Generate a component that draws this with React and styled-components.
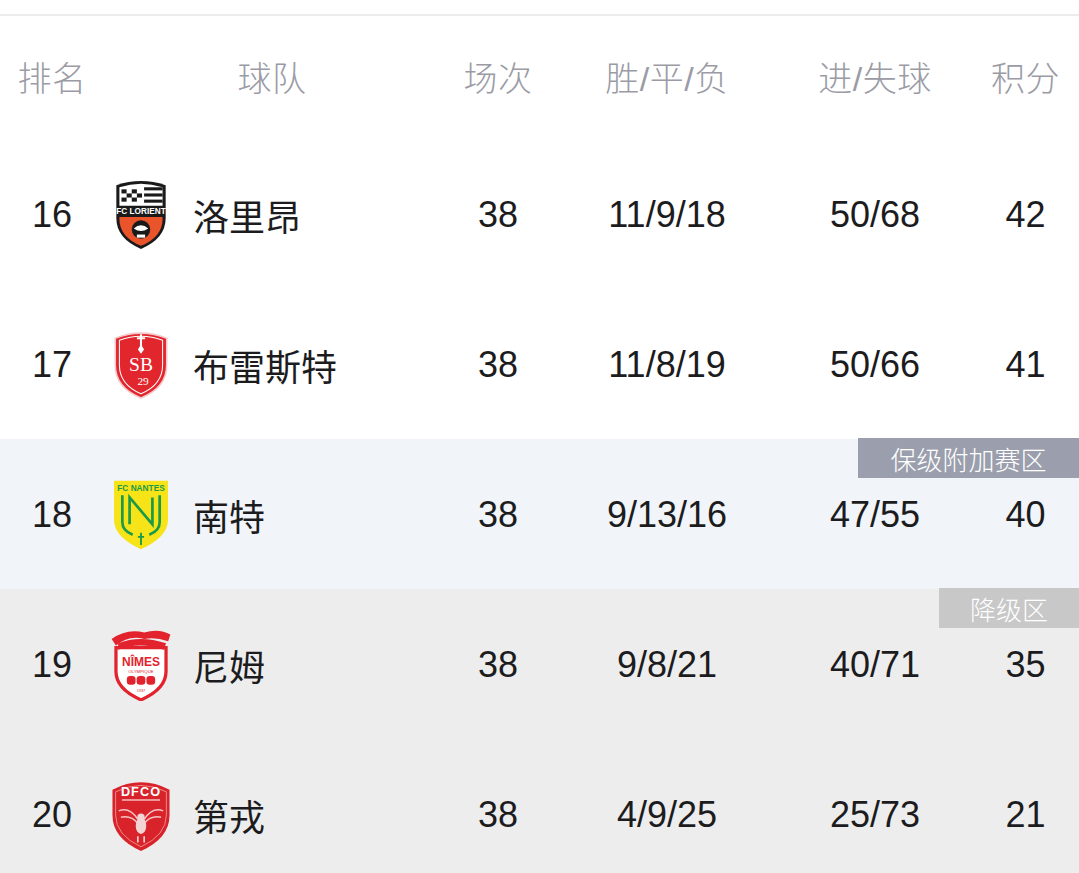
import React from "react"
import styled, { createGlobalStyle } from "styled-components"

const GlobalStyle = createGlobalStyle`
  html, body {
    margin: 0;
    padding: 0;
    background: #ffffff;
  }
  body {
    font-family: "Liberation Sans", "Noto Sans CJK SC", sans-serif;
    color: #1c1c1e;
  }
`

const COLS = "104px 336px 116px 222px 194px 107px"

const Page = styled.div`
  width: 1079px;
  height: 873px;
  overflow: hidden;
  padding-top: 14px;
  box-sizing: border-box;
`

const Header = styled.div`
  display: grid;
  grid-template-columns: ${COLS};
  align-items: center;
  height: 125px;
  border-top: 2px solid #ececee;
  box-sizing: border-box;
  color: #9b9ba6;
  font-size: 34px;
  font-weight: 300;
`

const HeadCell = styled.div`
  text-align: center;
  margin-top: -2px;
  letter-spacing: 0.5px;
`

const Row = styled.div`
  position: relative;
  display: grid;
  grid-template-columns: ${COLS};
  align-items: center;
  height: 150px;
  background: ${(p) => p.$bg || "#ffffff"};
  font-size: 36px;
`

const Cell = styled.div`
  text-align: center;
  padding-top: 2px;
`

const TeamCell = styled.div`
  display: flex;
  align-items: center;
  padding-left: 4px;
  gap: 19px;
`

const TeamName = styled.span`
  padding-top: 2px;
`

const LogoBox = styled.div`
  width: 66px;
  height: 76px;
  display: flex;
  align-items: center;
  justify-content: center;
`

const Badge = styled.div`
  position: absolute;
  top: -1px;
  right: 0;
  height: 40px;
  width: ${(p) => p.$w}px;
  background: ${(p) => p.$bg};
  color: #ffffff;
  font-size: 26px;
  font-weight: 300;
  display: flex;
  align-items: center;
  justify-content: center;
`

const Lorient = () => (
  <svg width="58" height="74" viewBox="4 0 52 72">
    <path d="M6 8 Q30 0 54 8 L54 40 Q54 60 30 70 Q6 60 6 40 Z" fill="#1a1a1a" />
    <path d="M9 10 Q30 3 51 10 L51 28 L9 28 Z" fill="#ffffff" />
    <g fill="#1a1a1a">
      <rect x="11" y="12" width="5" height="4" />
      <rect x="21" y="12" width="5" height="4" />
      <rect x="16" y="16" width="5" height="4" />
      <rect x="26" y="16" width="5" height="4" />
      <rect x="11" y="20" width="5" height="4" />
      <rect x="21" y="20" width="5" height="4" />
      <rect x="33" y="10" width="18" height="3" />
      <rect x="33" y="16" width="18" height="3" />
      <rect x="33" y="22" width="18" height="3" />
    </g>
    <text x="30" y="36" textAnchor="middle" fontSize="8" fontWeight="700" fill="#ffffff" fontFamily="Liberation Sans, sans-serif">FC LORIENT</text>
    <path d="M9 39 L51 39 L51 41 Q51 58 30 67 Q9 58 9 41 Z" fill="#e9542a" />
    <circle cx="30" cy="51" r="9" fill="#1a1a1a" />
    <path d="M23 50 Q30 44 37 50 Q30 55 23 50 Z" fill="#ffffff" />
    <rect x="26" y="56" width="8" height="3" fill="#ffffff" />
  </svg>
)

const Brest = () => (
  <svg width="58" height="72" viewBox="4 2 52 70">
    <path d="M5 12 Q30 2 55 12 L55 38 Q55 60 30 70 Q5 60 5 38 Z" fill="#e2262d" stroke="#f4c7c8" strokeWidth="1.5" />
    <path d="M9 14 Q30 6 51 14 L51 38 Q51 57 30 66 Q9 57 9 38 Z" fill="none" stroke="#ffffff" strokeWidth="1" />
    <path d="M30 8 L30 24 M26 12 L34 12" stroke="#ffffff" strokeWidth="2" />
    <path d="M30 18 L33 23 L30 27 L27 23 Z" fill="#ffffff" />
    <text x="30" y="44" textAnchor="middle" fontSize="19" fontFamily="Liberation Serif, serif" fill="#ffffff">SB</text>
    <text x="32" y="57" textAnchor="middle" fontSize="11" fontFamily="Liberation Serif, serif" fill="#ffffff">29</text>
  </svg>
)

const Nantes = () => (
  <svg width="56" height="74" viewBox="3 4 54 68">
    <path d="M4 6 L56 6 L56 44 Q56 60 30 72 Q4 60 4 44 Z" fill="#f6e318" />
    <text x="30" y="16" textAnchor="middle" fontSize="8" fontWeight="700" fill="#1d9a48" fontFamily="Liberation Sans, sans-serif">FC NANTES</text>
    <g fill="none" stroke="#1d9a48" strokeWidth="2.6">
      <path d="M12 20 L12 46 Q12 54 22 58" />
      <path d="M48 20 L48 46 Q48 54 38 58" />
      <path d="M19 48 L19 22 L41 48 L41 22" />
    </g>
    <path d="M30 56 L30 68 M27 60 L33 60" stroke="#1d9a48" strokeWidth="1.8" />
  </svg>
)

const Nimes = () => (
  <svg width="62" height="74" viewBox="3 3 56 68">
    <path d="M8 22 L54 22 L54 44 Q54 60 31 70 Q8 60 8 44 Z" fill="#ffffff" stroke="#e2232d" strokeWidth="3" />
    <path d="M4 14 Q18 4 34 8 Q48 4 58 10 L56 16 Q44 12 34 14 Q20 10 8 20 Z" fill="#e2232d" />
    <path d="M10 18 Q30 10 54 18 L52 24 Q30 16 10 24 Z" fill="#e2232d" />
    <text x="31" y="39" textAnchor="middle" fontSize="11" fontWeight="700" fill="#e2232d" fontFamily="Liberation Sans, sans-serif">NÎMES</text>
    <text x="31" y="45" textAnchor="middle" fontSize="4" fill="#e2232d" fontFamily="Liberation Sans, sans-serif">OLYMPIQUE</text>
    <g fill="#e2232d">
      <rect x="18" y="48" width="8" height="8" rx="3" />
      <rect x="27" y="48" width="8" height="8" rx="3" />
      <rect x="36" y="48" width="8" height="8" rx="3" />
    </g>
    <text x="31" y="63" textAnchor="middle" fontSize="3.5" fill="#e2232d" fontFamily="Liberation Sans, sans-serif">1937</text>
  </svg>
)

const Dijon = () => (
  <svg width="62" height="74" viewBox="3 2 56 70">
    <path d="M4 14 Q31 0 58 14 L58 38 Q58 60 31 72 Q4 60 4 38 Z" fill="#d8232a" />
    <path d="M7 16 Q31 4 55 16 L55 38 Q55 57 31 68 Q7 57 7 38 Z" fill="none" stroke="#f29a9e" strokeWidth="0.8" />
    <text x="31" y="20" textAnchor="middle" fontSize="12" fontWeight="700" fill="#ffffff" fontFamily="Liberation Sans, sans-serif" letterSpacing="1">DFCO</text>
    <rect x="13" y="23" width="36" height="1.5" fill="#f5b5b8" />
    <g fill="none" stroke="#f7c4c6" strokeWidth="1.4">
      <path d="M10 34 Q20 30 28 42" />
      <path d="M52 34 Q42 30 34 42" />
      <path d="M12 40 Q22 38 28 46" />
      <path d="M50 40 Q40 38 34 46" />
    </g>
    <ellipse cx="31" cy="48" rx="5" ry="8" fill="#f3d4d5" />
    <circle cx="31" cy="40" r="3.5" fill="#f3d4d5" />
    <path d="M28 58 L28 64 M34 58 L34 64" stroke="#f3d4d5" strokeWidth="1.5" />
  </svg>
)

const teams = [
  { rank: 16, name: "洛里昂", Logo: Lorient, played: 38, wdl: "11/9/18", goals: "50/68", pts: 42 },
  { rank: 17, name: "布雷斯特", Logo: Brest, played: 38, wdl: "11/8/19", goals: "50/66", pts: 41 },
  { rank: 18, name: "南特", Logo: Nantes, played: 38, wdl: "9/13/16", goals: "47/55", pts: 40, bg: "#f1f4f8", badge: { text: "保级附加赛区", w: 221, bg: "#9b9fad" } },
  { rank: 19, name: "尼姆", Logo: Nimes, played: 38, wdl: "9/8/21", goals: "40/71", pts: 35, bg: "#ededed", badge: { text: "降级区", w: 140, bg: "#c8c8c8" } },
  { rank: 20, name: "第戎", Logo: Dijon, played: 38, wdl: "4/9/25", goals: "25/73", pts: 21, bg: "#ededed" },
]

const App = () => (
  <Page>
    <GlobalStyle />
    <Header>
      <HeadCell>排名</HeadCell>
      <HeadCell>球队</HeadCell>
      <HeadCell>场次</HeadCell>
      <HeadCell>胜/平/负</HeadCell>
      <HeadCell>进/失球</HeadCell>
      <HeadCell>积分</HeadCell>
    </Header>
    {teams.map((t) => (
      <Row key={t.rank} $bg={t.bg}>
        <Cell>{t.rank}</Cell>
        <TeamCell>
          <LogoBox>
            <t.Logo />
          </LogoBox>
          <TeamName>{t.name}</TeamName>
        </TeamCell>
        <Cell>{t.played}</Cell>
        <Cell>{t.wdl}</Cell>
        <Cell>{t.goals}</Cell>
        <Cell>{t.pts}</Cell>
        {t.badge && (
          <Badge $w={t.badge.w} $bg={t.badge.bg}>
            {t.badge.text}
          </Badge>
        )}
      </Row>
    ))}
  </Page>
)

export default App
